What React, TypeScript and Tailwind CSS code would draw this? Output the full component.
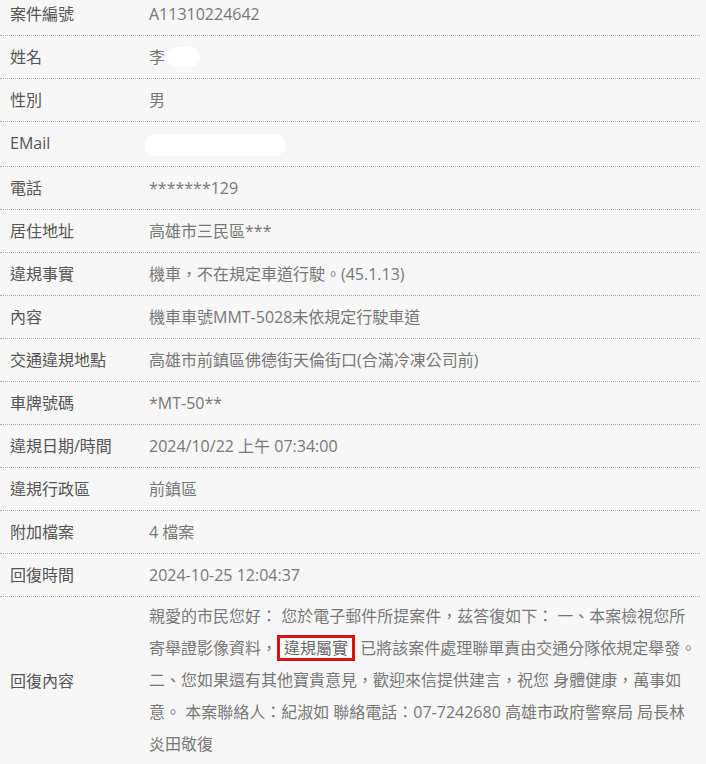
const rows: { label: string; value: React.ReactNode }[] = [
  { label: "案件編號", value: "A11310224642" },
  {
    label: "姓名",
    value: (
      <span className="inline-flex items-center">
        李
        <span className="ml-[2px] inline-block h-[20px] w-[33px] rounded-[10px] bg-white" />
      </span>
    ),
  },
  { label: "性別", value: "男" },
  {
    label: "EMail",
    value: <span className="-ml-[4px] inline-block h-[22px] w-[140px] rounded-[10px] bg-white align-middle" />,
  },
  { label: "電話", value: "*******129" },
  { label: "居住地址", value: "高雄市三民區***" },
  { label: "違規事實", value: "機車，不在規定車道行駛。(45.1.13)" },
  { label: "內容", value: "機車車號MMT-5028未依規定行駛車道" },
  { label: "交通違規地點", value: "高雄市前鎮區佛德街天倫街口(合滿冷凍公司前)" },
  { label: "車牌號碼", value: "*MT-50**" },
  { label: "違規日期/時間", value: "2024/10/22 上午 07:34:00" },
  { label: "違規行政區", value: "前鎮區" },
  { label: "附加檔案", value: "4 檔案" },
  { label: "回復時間", value: "2024-10-25 12:04:37" },
];

export default function App() {
  return (
    <div
      className="min-h-screen w-full overflow-hidden bg-[#f7f7f7] text-[16px]"
      style={{ fontFamily: '"Open Sans", "Noto Sans CJK TC", sans-serif' }}
    >
      <div className="-mt-[7px] w-[700px]">
        {rows.map((r) => (
          <div key={r.label} className="flex border-b border-dotted border-[#a8a8a8]">
            <div className="w-[139px] shrink-0 py-[10px] pl-[10px] leading-[22px] text-[#555]">{r.label}</div>
            <div className="flex-1 py-[10px] pl-[10px] leading-[22px] text-[#777]">{r.value}</div>
          </div>
        ))}

        {/* reply */}
        <div className="flex">
          <div className="flex w-[139px] shrink-0 items-center pl-[10px] text-[#555]">回復內容</div>
          <div className="flex-1 pl-[10px] pt-[3px] pb-[5px] leading-[32px] text-[#777]">
            親愛的市民您好： 您於電子郵件所提案件，茲答復如下： 一、本案檢視您所寄舉證影像資料，
            <span className="mr-[1px] inline-block border-[3px] border-[#e30d0d] bg-white px-[4px] leading-[20px] text-[#666]">
              違規屬實
            </span>{" "}
            已將該案件處理聯單責由交通分隊依規定舉發。 二、您如果還有其他寶貴意見，歡迎來信提供建言，祝您 身體健康，萬事如意。 本案聯絡人：紀淑如 聯絡電話：07-7242680 高雄市政府警察局 局長林炎田敬復
          </div>
        </div>
      </div>
    </div>
  );
}
